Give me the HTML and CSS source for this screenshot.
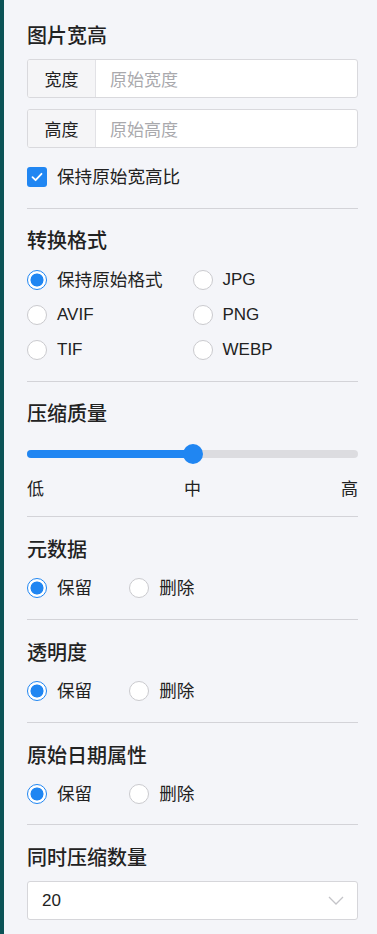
FILE: index.html
```html
<!DOCTYPE html>
<html lang="zh-CN">
<head>
<meta charset="utf-8">
<title>设置</title>
<link rel="stylesheet" href="styles.css">
</head>
<body>
<div class="app">
  <div class="edge"></div>
  <div class="panel">
    <section class="sec sec-size">
      <h2 class="title">图片宽高</h2>
      <div class="input-group">
        <span class="addon">宽度</span>
        <span class="field placeholder">原始宽度</span>
      </div>
      <div class="input-group">
        <span class="addon">高度</span>
        <span class="field placeholder">原始高度</span>
      </div>
      <label class="check-row">
        <span class="checkbox">
          <svg width="14" height="14" viewBox="0 0 14 14"><polyline points="2.5,7.2 5.6,10.2 11.5,3.8" fill="none" stroke="#fff" stroke-width="1.8" stroke-linecap="round" stroke-linejoin="round"/></svg>
        </span>
        <span class="label">保持原始宽高比</span>
      </label>
    </section>

    <section class="sec sec-format">
      <h2 class="title">转换格式</h2>
      <div class="radio-grid">
        <label class="radio-item"><span class="radio on"></span><span class="label">保持原始格式</span></label>
        <label class="radio-item"><span class="radio"></span><span class="label latin">JPG</span></label>
        <label class="radio-item"><span class="radio"></span><span class="label latin">AVIF</span></label>
        <label class="radio-item"><span class="radio"></span><span class="label latin">PNG</span></label>
        <label class="radio-item"><span class="radio"></span><span class="label latin">TIF</span></label>
        <label class="radio-item"><span class="radio"></span><span class="label latin">WEBP</span></label>
      </div>
    </section>

    <section class="sec sec-quality">
      <h2 class="title">压缩质量</h2>
      <div class="slider">
        <div class="track"><div class="fill" style="width: 50%"></div></div>
        <div class="thumb" style="left: 50%"></div>
      </div>
      <div class="scale"><span>低</span><span>中</span><span>高</span></div>
    </section>

    <section class="sec sec-opt">
      <h2 class="title">元数据</h2>
      <div class="radio-row">
        <label class="radio-item"><span class="radio on"></span><span class="label">保留</span></label>
        <label class="radio-item"><span class="radio"></span><span class="label">删除</span></label>
      </div>
    </section>

    <section class="sec sec-opt">
      <h2 class="title">透明度</h2>
      <div class="radio-row">
        <label class="radio-item"><span class="radio on"></span><span class="label">保留</span></label>
        <label class="radio-item"><span class="radio"></span><span class="label">删除</span></label>
      </div>
    </section>

    <section class="sec sec-opt sec-tight">
      <h2 class="title">原始日期属性</h2>
      <div class="radio-row">
        <label class="radio-item"><span class="radio on"></span><span class="label">保留</span></label>
        <label class="radio-item"><span class="radio"></span><span class="label">删除</span></label>
      </div>
    </section>

    <section class="sec sec-last">
      <h2 class="title">同时压缩数量</h2>
      <div class="select">
        <span class="value">20</span>
        <svg class="chev" width="16" height="9" viewBox="0 0 16 9"><polyline points="1,1 8,8 15,1" fill="none" stroke="#c4c4c8" stroke-width="1.3"/></svg>
      </div>
    </section>
  </div>
</div>
</body>
</html>
```

FILE: styles.css
```css
* { box-sizing: border-box; }

html, body {
  margin: 0;
  padding: 0;
  background: #f4f5f9;
}

body {
  font-family: "Liberation Sans", "Noto Sans CJK SC", sans-serif;
  font-size: 17px;
  color: #222;
}

.app {
  display: flex;
  min-height: 934px;
}

.edge {
  width: 4px;
  flex: none;
  background: #0b5356;
}

.panel {
  flex: 1;
  padding: 23px 19px 0 23px;
  background: #f4f5f9;
}

.sec {
  border-bottom: 1px solid #d3d3d8;
  padding: 20px 0 19px;
}

.sec-size { padding-top: 0; }
.sec-format { padding-top: 19px; }
.sec-quality { padding-top: 19px; padding-bottom: 16px; }
.sec-tight { padding-bottom: 18px; }
.sec-last { border-bottom: none; }

.title {
  margin: 0;
  font-family: "Noto Sans CJK SC", sans-serif;
  font-size: 20px;
  font-weight: 500;
  line-height: 24px;
  color: #222;
}

/* input groups */
.input-group {
  display: flex;
  height: 39px;
  margin-top: 11px;
  border: 1px solid #d9d9dd;
  border-radius: 3px;
  background: #fff;
  overflow: hidden;
}

.sec-size .title + .input-group { margin-top: 12px; }

.addon {
  width: 68px;
  flex: none;
  display: flex;
  align-items: center;
  justify-content: center;
  background: #f5f5f7;
  border-right: 1px solid #e2e2e6;
  font-family: "Noto Sans CJK SC", sans-serif;
  font-size: 17px;
  color: #222;
}

.field {
  flex: 1;
  display: flex;
  align-items: center;
  padding-left: 14px;
  font-family: "Noto Sans CJK SC", sans-serif;
  font-size: 17px;
}

.placeholder { color: #a9a9ad; }

/* checkbox */
.check-row {
  display: flex;
  align-items: center;
  height: 24px;
  margin-top: 17px;
}

.checkbox {
  width: 20px;
  height: 20px;
  border-radius: 3px;
  background: #2086f2;
  display: flex;
  align-items: center;
  justify-content: center;
  margin-right: 10px;
}

.label {
  line-height: 24px;
  font-size: 17.6px;
}

.label.latin { font-size: 17px; }

/* radios */
.radio-grid {
  display: grid;
  grid-template-columns: 1fr 1fr;
  row-gap: 11px;
  margin-top: 16px;
}

.radio-row {
  display: flex;
  gap: 37px;
  margin-top: 15px;
}

.radio-item {
  display: flex;
  align-items: center;
  height: 24px;
}

.radio {
  width: 20px;
  height: 20px;
  border-radius: 50%;
  border: 1px solid #cacace;
  background: #fff;
  margin-right: 10px;
  flex: none;
}

.radio.on {
  border-color: #2086f2;
  background: radial-gradient(circle, #2086f2 0 6.2px, #fff 6.8px);
}

/* slider */
.slider {
  position: relative;
  height: 20px;
  margin-top: 19px;
  display: flex;
  align-items: center;
}

.track {
  width: 100%;
  height: 8px;
  border-radius: 4px;
  background: #dcdce0;
  overflow: hidden;
}

.fill {
  height: 100%;
  background: #2086f2;
}

.thumb {
  position: absolute;
  top: 0;
  width: 20px;
  height: 20px;
  margin-left: -10px;
  border-radius: 50%;
  background: #2086f2;
}

.scale {
  display: flex;
  justify-content: space-between;
  margin-top: 12px;
  line-height: 24px;
  font-family: "Noto Sans CJK SC", sans-serif;
  font-size: 17px;
}

/* select */
.select {
  display: flex;
  align-items: center;
  justify-content: space-between;
  height: 39px;
  margin-top: 12px;
  padding: 0 13px 0 14px;
  background: #fff;
  border: 1px solid #d6d6da;
  border-radius: 3px;
}

.value {
  font-size: 17px;
  color: #222;
}
```
